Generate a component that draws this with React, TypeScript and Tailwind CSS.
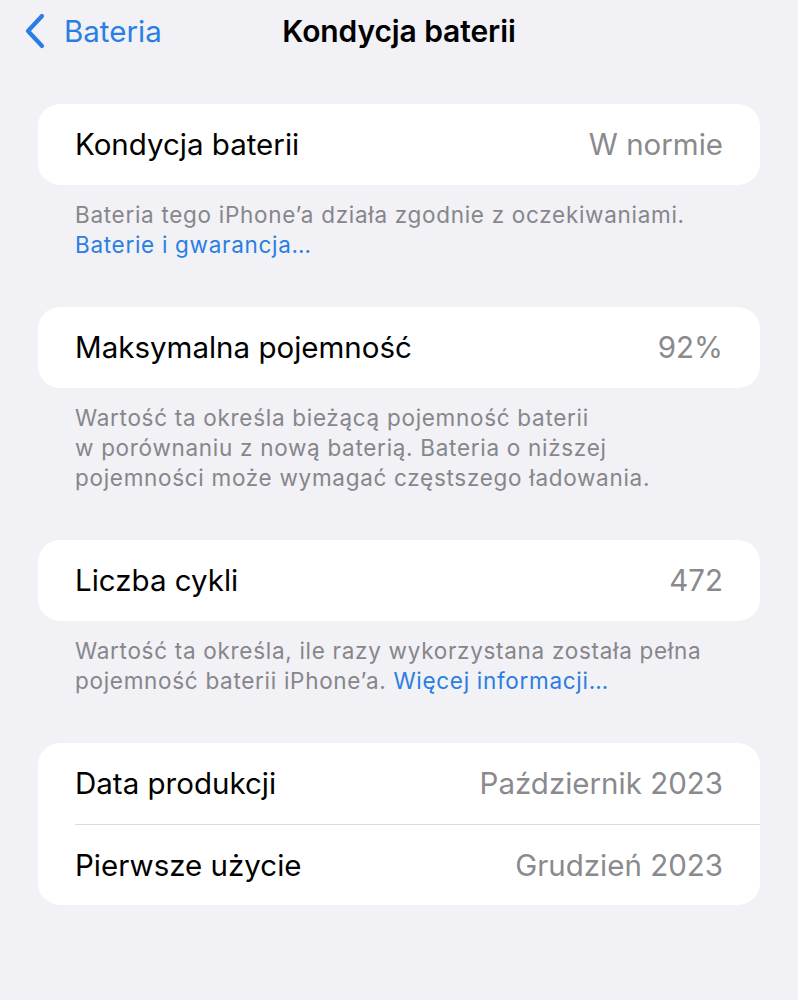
import React from 'react';

interface Row {
  label: string;
  value: string;
}

interface Section {
  rows: Row[];
  footer?: React.ReactNode;
}

const Link: React.FC<{ children: React.ReactNode }> = ({ children }) => (
  <span className="text-[#2a7ee3]">{children}</span>
);

const sections: Section[] = [
  {
    rows: [{ label: 'Kondycja baterii', value: 'W normie' }],
    footer: (
      <>
        Bateria tego iPhone’a działa zgodnie z oczekiwaniami.
        <br />
        <Link>Baterie i gwarancja…</Link>
      </>
    ),
  },
  {
    rows: [{ label: 'Maksymalna pojemność', value: '92%' }],
    footer: (
      <>
        Wartość ta określa bieżącą pojemność baterii
        <br />
        w porównaniu z nową baterią. Bateria o niższej
        <br />
        pojemności może wymagać częstszego ładowania.
      </>
    ),
  },
  {
    rows: [{ label: 'Liczba cykli', value: '472' }],
    footer: (
      <>
        Wartość ta określa, ile razy wykorzystana została pełna
        <br />
        pojemność baterii iPhone’a. <Link>Więcej informacji…</Link>
      </>
    ),
  },
  {
    rows: [
      { label: 'Data produkcji', value: 'Październik 2023' },
      { label: 'Pierwsze użycie', value: 'Grudzień 2023' },
    ],
  },
];

const App: React.FC = () => {
  return (
    <div
      className="min-h-[1000px] w-[798px] bg-[#f1f1f6] antialiased"
      style={{ fontFamily: 'Inter, "Noto Sans", sans-serif' }}
    >
      {/* navigation bar */}
      <div className="relative flex h-[62px] items-center">
        <div className="flex items-center pl-[24px] text-[#2a7ee3]">
          <svg width="22" height="36" viewBox="0 0 22 36" fill="none">
            <path
              d="M18 3 L4 18 L18 33"
              stroke="currentColor"
              strokeWidth="4.2"
              strokeLinecap="round"
              strokeLinejoin="round"
            />
          </svg>
          <span className="ml-[18px] text-[29.5px]">Bateria</span>
        </div>
        <div className="pointer-events-none absolute left-0 right-0 top-0 flex h-[62px] items-center justify-center">
          <span className="text-[30px] font-semibold tracking-[-0.1px] text-black">Kondycja baterii</span>
        </div>
      </div>

      <div className="flex flex-col gap-[47px] px-[38px] pt-[42px]">
        {sections.map((s, i) => (
          <div key={i}>
            <div className="overflow-hidden rounded-[22px] bg-white">
              {s.rows.map((r, j) => (
                <div key={j} className="flex">
                  <div
                    className={`ml-[37px] flex h-[81px] flex-1 items-center justify-between pr-[37px] ${
                      j > 0 ? 'border-t border-[#dcdce0]' : ''
                    }`}
                  >
                    <span className="text-[29.5px] text-black">{r.label}</span>
                    <span className="text-[29.5px] text-[#8a8a8e]">{r.value}</span>
                  </div>
                </div>
              ))}
            </div>
            {s.footer && (
              <div className="px-[37px] pt-[15px] text-[22.5px] leading-[30px] tracking-[0.7px] text-[#86868b]">
                {s.footer}
              </div>
            )}
          </div>
        ))}
      </div>
    </div>
  );
};

export default App;
